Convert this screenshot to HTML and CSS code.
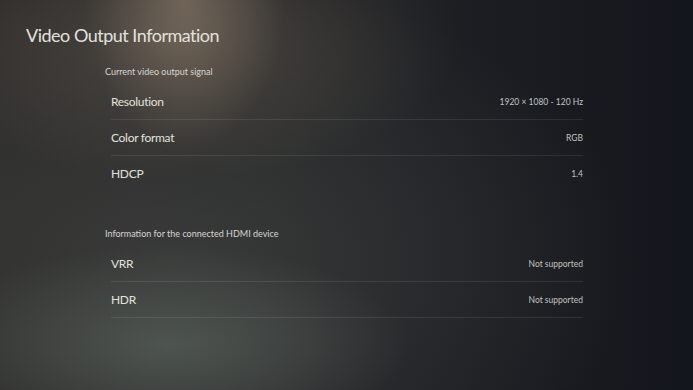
FILE: index.html
```html
<!DOCTYPE html>
<html lang="en">
<head>
    <meta charset="UTF-8">
    <meta name="viewport" content="width=device-width, initial-scale=1.0">
    <title>Video Output Information</title>
    <link rel="stylesheet" href="styles.css">
</head>
<body>
    <div class="screen">
        <h1 class="page-title">Video Output Information</h1>

        <div class="section">
            <div class="section-label">Current video output signal</div>
            <div class="row">
                <span class="row-name">Resolution</span>
                <span class="row-value">1920 × 1080 - 120 Hz</span>
            </div>
            <div class="row">
                <span class="row-name">Color format</span>
                <span class="row-value">RGB</span>
            </div>
            <div class="row no-line">
                <span class="row-name">HDCP</span>
                <span class="row-value">1.4</span>
            </div>
        </div>

        <div class="section second">
            <div class="section-label">Information for the connected HDMI device</div>
            <div class="row">
                <span class="row-name">VRR</span>
                <span class="row-value">Not supported</span>
            </div>
            <div class="row">
                <span class="row-name">HDR</span>
                <span class="row-value">Not supported</span>
            </div>
        </div>
    </div>
</body>
</html>
```

FILE: styles.css
```css
:root {
    --bg-color: #1b1d21;
    --title-color: #e2e2dd;
    --label-color: #d6d6d2;
    --value-color: #c2c3c0;
    --line-color: rgba(255, 255, 255, 0.09);
}

html, body {
    margin: 0;
    padding: 0;
}

body {
    font-family: Lato, 'Open Sans', sans-serif;
    background-color: var(--bg-color);
    color: var(--title-color);
}

.screen {
    width: 693px;
    height: 390px;
    box-sizing: border-box;
    overflow: hidden;
    padding: 22px 0 0 0;
    background:
        radial-gradient(ellipse 100px 150px at 185px 0px, rgba(160, 140, 120, 0.5), rgba(160, 140, 120, 0) 100%),
        radial-gradient(ellipse 280px 140px at 180px 40px, rgba(112, 100, 88, 0.45), rgba(112, 100, 88, 0) 100%),
        radial-gradient(ellipse 240px 100px at 170px 345px, rgba(96, 106, 100, 0.6), rgba(96, 106, 100, 0) 100%),
        radial-gradient(ellipse 460px 280px at 180px 260px, rgba(72, 74, 72, 0.55), rgba(72, 74, 72, 0) 100%),
        linear-gradient(90deg, #2a2928 0%, #242526 40%, #1b1d22 70%, #13161c 100%);
}

.page-title {
    margin: 0 0 0 26px;
    font-size: 18px;
    font-weight: 400;
    line-height: 26px;
    letter-spacing: -0.5px;
}

.section {
    margin: 18px 0 0 105px;
    width: 478px;
}

.section.second {
    margin-top: 37px;
}

.section-label {
    font-size: 9px;
    line-height: 12px;
    margin-bottom: 6px;
    color: var(--label-color);
}

.row {
    display: flex;
    align-items: center;
    justify-content: space-between;
    height: 35px;
    margin-left: 6px;
    border-bottom: 1px solid var(--line-color);
}

.row.no-line {
    border-bottom: none;
}

.row-name {
    font-size: 12px;
    letter-spacing: -0.3px;
    color: var(--title-color);
}

.row-value {
    font-size: 8.5px;
    color: var(--value-color);
}
```
